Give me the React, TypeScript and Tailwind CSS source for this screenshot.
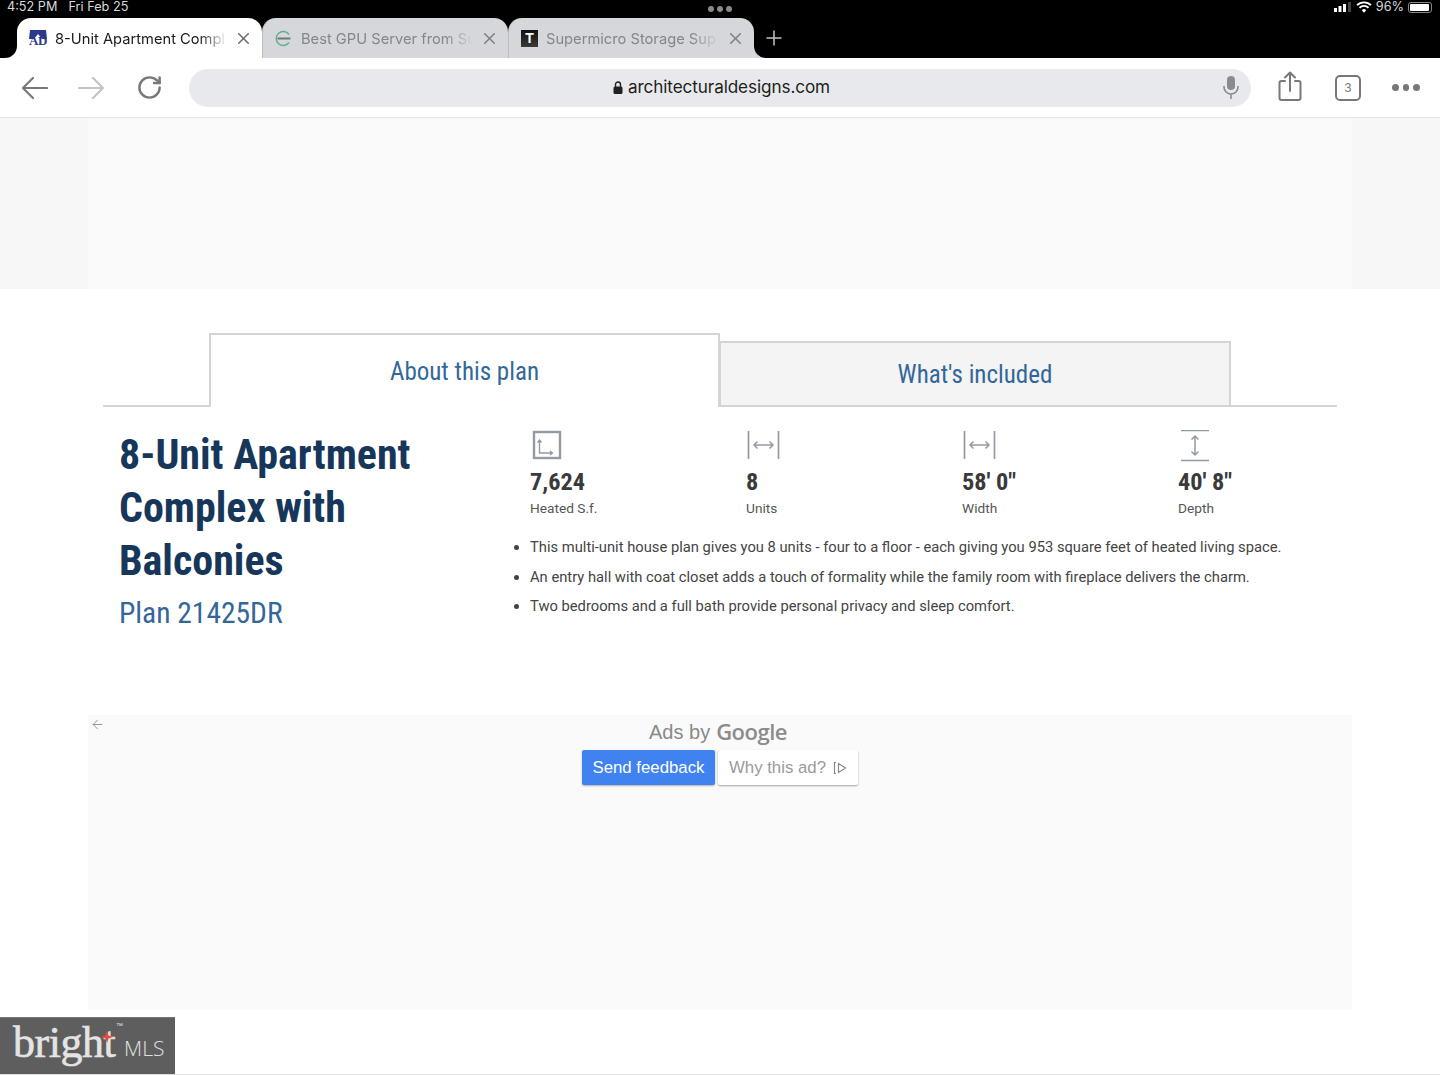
import React from 'react';
import { X, Plus, ArrowLeft, RotateCw } from 'lucide-react';

const condensed = 'font-["Roboto"] [font-stretch:75%]';

const tabs = [
  { title: '8-Unit Apartment Compl', active: true },
  { title: 'Best GPU Server from Su', active: false },
  { title: 'Supermicro Storage Sup', active: false },
];

const Favicon: React.FC<{ index: number }> = ({ index }) => {
  if (index === 0) {
    return (
      <div className="relative w-[18px] h-[18px] flex-none mr-[8px] bg-white flex items-end justify-center overflow-hidden">
        <svg width="18" height="18" viewBox="0 0 18 18" className="absolute left-0 top-0">
          <path d="M1 1h16l1 9h-5L9 5 5 10H0z" fill="#2c3a8c" />
        </svg>
        <span className="relative text-[13px] leading-[13px] font-bold text-[#2c3a8c] font-['Liberation_Serif',serif] tracking-[-0.5px]">AD</span>
      </div>
    );
  }
  if (index === 1) {
    return (
      <svg width="17" height="17" viewBox="0 0 17 17" className="flex-none mr-[9px]" fill="none">
        <path d="M14 4.500A7 7 0 1 0 14 12.500" stroke="#5fb08c" strokeWidth="1.500" />
        <path d="M2.500 8.500h13" stroke="#6f7680" strokeWidth="2" />
      </svg>
    );
  }
  return (
    <div className="w-[17px] h-[17px] flex-none mr-[8px] bg-gradient-to-b from-[#111] to-[#3a3a3a] flex items-center justify-center">
      <span className="text-[14px] leading-none font-bold text-white font-['Liberation_Sans',sans-serif]">T</span>
    </div>
  );
};

const BrowserChrome: React.FC = () => (
  <header className="flex-none">
    <div className="bg-black h-[58px] flex flex-col">
      <div className="h-[18px] flex items-start justify-between px-[7px] text-[#d8d8d8] text-[12.700px] leading-[14px] font-['Inter',sans-serif]">
        <div className="flex gap-[11px] w-[300px]">
          <span>4:52 PM</span>
          <span>Fri Feb 25</span>
        </div>
        <div className="flex gap-[3px] mt-[6px]">
          <span className="w-[6px] h-[6px] rounded-full bg-[#8a8a8a]" />
          <span className="w-[6px] h-[6px] rounded-full bg-[#8a8a8a]" />
          <span className="w-[6px] h-[6px] rounded-full bg-[#8a8a8a]" />
        </div>
        <div className="flex items-center justify-end gap-[4px] w-[300px] pr-[1px]">
          <svg width="17" height="10" viewBox="0 0 17 10" fill="#fff">
            <rect x="0" y="6" width="3" height="4" />
            <rect x="4.500" y="4" width="3" height="6" />
            <rect x="9" y="2" width="3" height="8" />
            <rect x="14" y="0" width="3" height="10" fill="#444" />
          </svg>
          <svg width="16" height="12" viewBox="0 0 16 12" fill="none" stroke="#fff" strokeWidth="1.800" className="ml-[1px]">
            <path d="M1 4.200a10 10 0 0 1 14 0" />
            <path d="M3.500 6.800a6.200 6.200 0 0 1 9 0" />
            <path d="M8 11.800 5.800 9.200a3 3 0 0 1 4.400 0z" fill="#fff" stroke="none" />
          </svg>
          <span>96%</span>
          <div className="w-[24px] h-[11px] rounded-[3px] border border-[#888] p-[1px]">
            <div className="w-[19px] h-full rounded-[1px] bg-white" />
          </div>
        </div>
      </div>
      <div className="flex items-center h-[40px] pl-[17px]">
        {tabs.map((tab, i) => (
          <div
            key={tab.title}
            className={`relative h-full flex items-center pl-[12px] pr-[9px] rounded-t-[14px] ${i === 0 ? 'w-[245px] bg-white' : 'w-[246px] bg-[#d6d7db] border-l border-[#bdbec2]'}`}
          >
            {i === 0 && (
              <div className="absolute -left-[17px] bottom-0 w-[17px] h-[14px] bg-white">
                <div className="w-full h-full bg-black rounded-br-[12px]" />
              </div>
            )}
            {i === 2 && (
              <div className="absolute -right-[12px] bottom-0 w-[12px] h-[14px] bg-[#d6d7db]">
                <div className="w-full h-full bg-black rounded-bl-[12px]" />
              </div>
            )}
            <Favicon index={i} />
            <span className={`flex-1 min-w-0 pt-[2px] overflow-hidden whitespace-nowrap text-[14.700px] font-['Inter',sans-serif] [mask-image:linear-gradient(to_right,black_82%,transparent_98%)] ${tab.active ? 'text-[#1c1c1e]' : 'text-[#85868a]'}`}>
              {tab.title}
            </span>
            <X size={19} strokeWidth={2} className={tab.active ? 'ml-[3px] text-[#6e6e72] flex-none' : 'ml-[3px] text-[#808186] flex-none'} />
          </div>
        ))}
        <Plus size={24} strokeWidth={1.500} className="ml-[8px] text-[#c4c4c4]" />
      </div>
    </div>
    <div className="h-[60px] bg-white border-b border-[#e3e3e5] flex items-center">
      <div className="w-[189px] flex-none flex items-center pl-[21px]">
        <svg width="27" height="24" viewBox="0 0 27 24" fill="none" stroke="#77787c" strokeWidth="2.200" strokeLinecap="round" strokeLinejoin="round">
          <path d="M26 12H2M12 2 2 12l10 10" />
        </svg>
        <svg width="27" height="24" viewBox="0 0 27 24" fill="none" stroke="#c3c4c7" strokeWidth="2.200" strokeLinecap="round" strokeLinejoin="round" className="ml-[30px]">
          <path d="M1 12h24M15 2l10 10-10 10" />
        </svg>
        <RotateCw size={27} strokeWidth={2.200} className="ml-[31px] text-[#77787c]" />
      </div>
      <div className="w-[1062px] h-[38px] rounded-full bg-[#e8e9ed] flex items-center justify-center relative">
        <svg width="10" height="13" viewBox="0 0 10 13" fill="#222" className="mr-[5px] ml-[3px]">
          <path d="M2.500 6V3.500a2.500 2.500 0 0 1 5 0V6" fill="none" stroke="#222" strokeWidth="1.400" />
          <rect x="0.500" y="5.500" width="9" height="7.500" rx="1.500" />
        </svg>
        <span className="pb-[1px] text-[#1e1e20] text-[17.150px] font-['Inter',sans-serif] tracking-[-0.1px]">architecturaldesigns.com</span>
        <svg width="18" height="25" viewBox="0 0 18 25" fill="none" className="absolute right-[11px]">
          <rect x="5" y="1" width="8" height="14" rx="4" fill="#8a8b90" />
          <path d="M2 11v1a7 7 0 0 0 14 0v-1M9 19v5" stroke="#8a8b90" strokeWidth="1.600" />
        </svg>
      </div>
      <div className="flex items-center pl-[27px]">
        <svg width="24" height="30" viewBox="0 0 24 30" fill="none" stroke="#77787c" strokeWidth="2" strokeLinecap="round" strokeLinejoin="round" className="-mt-[3px]">
          <path d="M7 10H3.500A2 2 0 0 0 1.500 12v15a2 2 0 0 0 2 2h17a2 2 0 0 0 2-2V12a2 2 0 0 0-2-2H17" />
          <path d="M12 20V2M7 6.500 12 1.500l5 5" />
        </svg>
        <div className="ml-[33px] w-[26px] h-[26px] rounded-[5px] border-2 border-[#77787c] flex items-center justify-center text-[12px] text-[#77787c] font-['Inter',sans-serif]">3</div>
        <div className="flex gap-[4px] ml-[31px]">
          <span className="w-[6.500px] h-[6.500px] rounded-full bg-[#77787c]" />
          <span className="w-[6.500px] h-[6.500px] rounded-full bg-[#77787c]" />
          <span className="w-[6.500px] h-[6.500px] rounded-full bg-[#77787c]" />
        </div>
      </div>
    </div>
  </header>
);

const stats = [
  { icon: 'area', value: '7,624', label: 'Heated S.f.' },
  { icon: 'h', value: '8', label: 'Units' },
  { icon: 'h', value: "58' 0\"", label: 'Width' },
  { icon: 'v', value: "40' 8\"", label: 'Depth' },
];

const StatIcon: React.FC<{ type: string }> = ({ type }) => {
  if (type === 'area') {
    return (
      <svg width="32" height="32" viewBox="0 0 32 32" fill="none" stroke="#949aa2">
        <rect x="4" y="2" width="26" height="26" strokeWidth="2.400" />
        <path d="M9.500 10v13h13M7.500 12.500l2-2.500 2 2.500M20 21l2.500 2-2.500 2" strokeWidth="1.400" />
      </svg>
    );
  }
  if (type === 'h') {
    return (
      <svg width="34" height="32" viewBox="0 0 34 32" fill="none" stroke="#949aa2">
        <path d="M2.500 1v28M32.500 1v28" strokeWidth="1.700" />
        <path d="M8 15h19M11.500 11.500 8 15l3.500 3.500M23.500 11.500 27 15l-3.500 3.500" strokeWidth="1.500" />
      </svg>
    );
  }
  return (
    <svg width="34" height="32" viewBox="0 0 34 32" fill="none" stroke="#949aa2">
      <path d="M3 0.500h28M3 30.500h28" strokeWidth="1.700" />
      <path d="M17 6v19M13.500 9.500 17 6l3.500 3.500M13.500 21.500 17 25l3.500-3.500" strokeWidth="1.500" />
    </svg>
  );
};

const bullets = [
  'This multi-unit house plan gives you 8 units - four to a floor - each giving you 953 square feet of heated living space.',
  'An entry hall with coat closet adds a touch of formality while the family room with fireplace delivers the charm.',
  'Two bedrooms and a full bath provide personal privacy and sleep comfort.',
];

const PlanDetails: React.FC = () => (
  <section className="w-[1234px] ml-[103px]">
    <div className="flex items-end h-[74px] border-b-2 border-[#d4d4d4]">
      <div className={`ml-[106px] w-[511px] h-[74px] -mb-[2px] pt-[2px] bg-white border-t-2 border-x-2 border-[#d4d4d4] flex items-center justify-center text-[25px] text-[#33679a] ${condensed}`}>
        About this plan
      </div>
      <div className={`w-[512px] h-[64px] pt-[2px] bg-[#f4f4f4] border-t-2 border-x-2 border-[#d4d4d4] -ml-[1px] flex items-center justify-center text-[25px] text-[#33679a] ${condensed}`}>
        What's included
      </div>
    </div>
    <div className="flex pt-[23px] pl-[17px]">
      <div className="w-[410px] flex-none -ml-[1px] mr-[1px]">
        <h1 className={`-mt-[2px] text-[42px] leading-[53px] font-bold text-[#17375a] ${condensed}`}>
          8-Unit Apartment<br />Complex with<br />Balconies
        </h1>
        <p className={`text-[29.500px] leading-[53px] text-[#33679a] ${condensed}`}>Plan 21425DR</p>
      </div>
      <div className="flex-1">
        <div className="grid grid-cols-[216px_216px_216px_216px]">
          {stats.map((s) => (
            <div key={s.label} className="flex flex-col items-start">
              <StatIcon type={s.icon} />
              <span className={`mt-[4px] text-[24.300px] leading-[32px] font-bold text-[#3a3a3a] ${condensed}`}>{s.value}</span>
              <span className="text-[13.700px] leading-[20px] text-[#555] font-['Roboto',sans-serif]">{s.label}</span>
            </div>
          ))}
        </div>
        <ul className="mt-[19px] flex flex-col gap-[9.500px] list-disc pl-[17px] -ml-[17px] text-[14.740px] leading-[20px] text-[#444] font-['Roboto',sans-serif]">
          {bullets.map((b) => (
            <li key={b} className="whitespace-nowrap">{b}</li>
          ))}
        </ul>
      </div>
    </div>
  </section>
);

const AdSlot: React.FC = () => (
  <div className="relative w-[1264px] h-[295px] ml-[88px] bg-[#fafafa] flex flex-col items-center">
    <ArrowLeft size={15} strokeWidth={1.500} className="absolute left-[2px] top-[2px] text-[#8f8f8f]" />
    <div className="h-[33px] mb-[2px] flex items-center justify-center gap-[6px] text-[#8a8a8a] -ml-[4px]">
      <span className="text-[20px] font-['Liberation_Sans',sans-serif]">Ads by</span>
      <span className="text-[22px] font-semibold tracking-[-0.5px] font-['Open_Sans',sans-serif] text-[#8c8c8c]">Google</span>
    </div>
    <div className="flex gap-[3px]">
      <div className="w-[133px] h-[35px] bg-[#3f82f0] rounded-[2px] shadow-[0_1px_2px_rgba(0,0,0,0.3)] flex items-center justify-center text-white text-[16.800px] font-['Liberation_Sans',sans-serif]">
        Send feedback
      </div>
      <div className="w-[140px] h-[35px] bg-white rounded-[2px] shadow-[0_1px_2px_rgba(0,0,0,0.35)] flex items-center justify-center gap-[7px] text-[#9a9a9a] text-[16.800px] font-['Liberation_Sans',sans-serif]">
        Why this ad?
        <svg width="14" height="14" viewBox="0 0 14 14" fill="none" stroke="#8a8a8a" strokeWidth="1.200">
          <path d="M3 1.500H1.500v11H3M5.500 2.500l7 4.500-7 4.500z" />
        </svg>
      </div>
    </div>
  </div>
);

const BrightBadge: React.FC = () => (
  <div className="absolute left-0 bottom-0 w-[175px] h-[57px] bg-[#5e5e5e] border-t border-[#777] flex items-center pl-[13px] overflow-hidden">
    <span className="relative text-[44px] leading-none -mt-[6px] text-[#e4e4e4] [-webkit-text-stroke:0.6px_#e4e4e4] tracking-[-0.5px] font-['Liberation_Serif',serif]">
      bright
      <svg width="12" height="12" viewBox="0 0 10 10" className="absolute right-[2px] top-[10px]">
        <path d="M5 0 6.300 3.700 10 5 6.300 6.300 5 10 3.700 6.300 0 5 3.700 3.700z" fill="#e0503f" />
      </svg>
      <span className="absolute -right-[8px] top-[1px] text-[7px] leading-none tracking-normal [-webkit-text-stroke:0] font-['Liberation_Sans',sans-serif]">™</span>
    </span>
    <span className="ml-[9px] mt-[6px] text-[21px] text-[#e0e0e0] font-['Open_Sans',sans-serif] font-light">MLS</span>
  </div>
);

const App: React.FC = () => (
  <div className="relative w-[1440px] h-[1075px] bg-white overflow-hidden border-b border-[#ddd]">
    <BrowserChrome />
    <div className="h-[171px] bg-[#f7f7f7] px-[88px]">
      <div className="h-full bg-[#fafafa]" />
    </div>
    <div className="mt-[44px]">
      <PlanDetails />
    </div>
    <div className="mt-[75px]">
      <AdSlot />
    </div>
    <BrightBadge />
  </div>
);

export default App;
